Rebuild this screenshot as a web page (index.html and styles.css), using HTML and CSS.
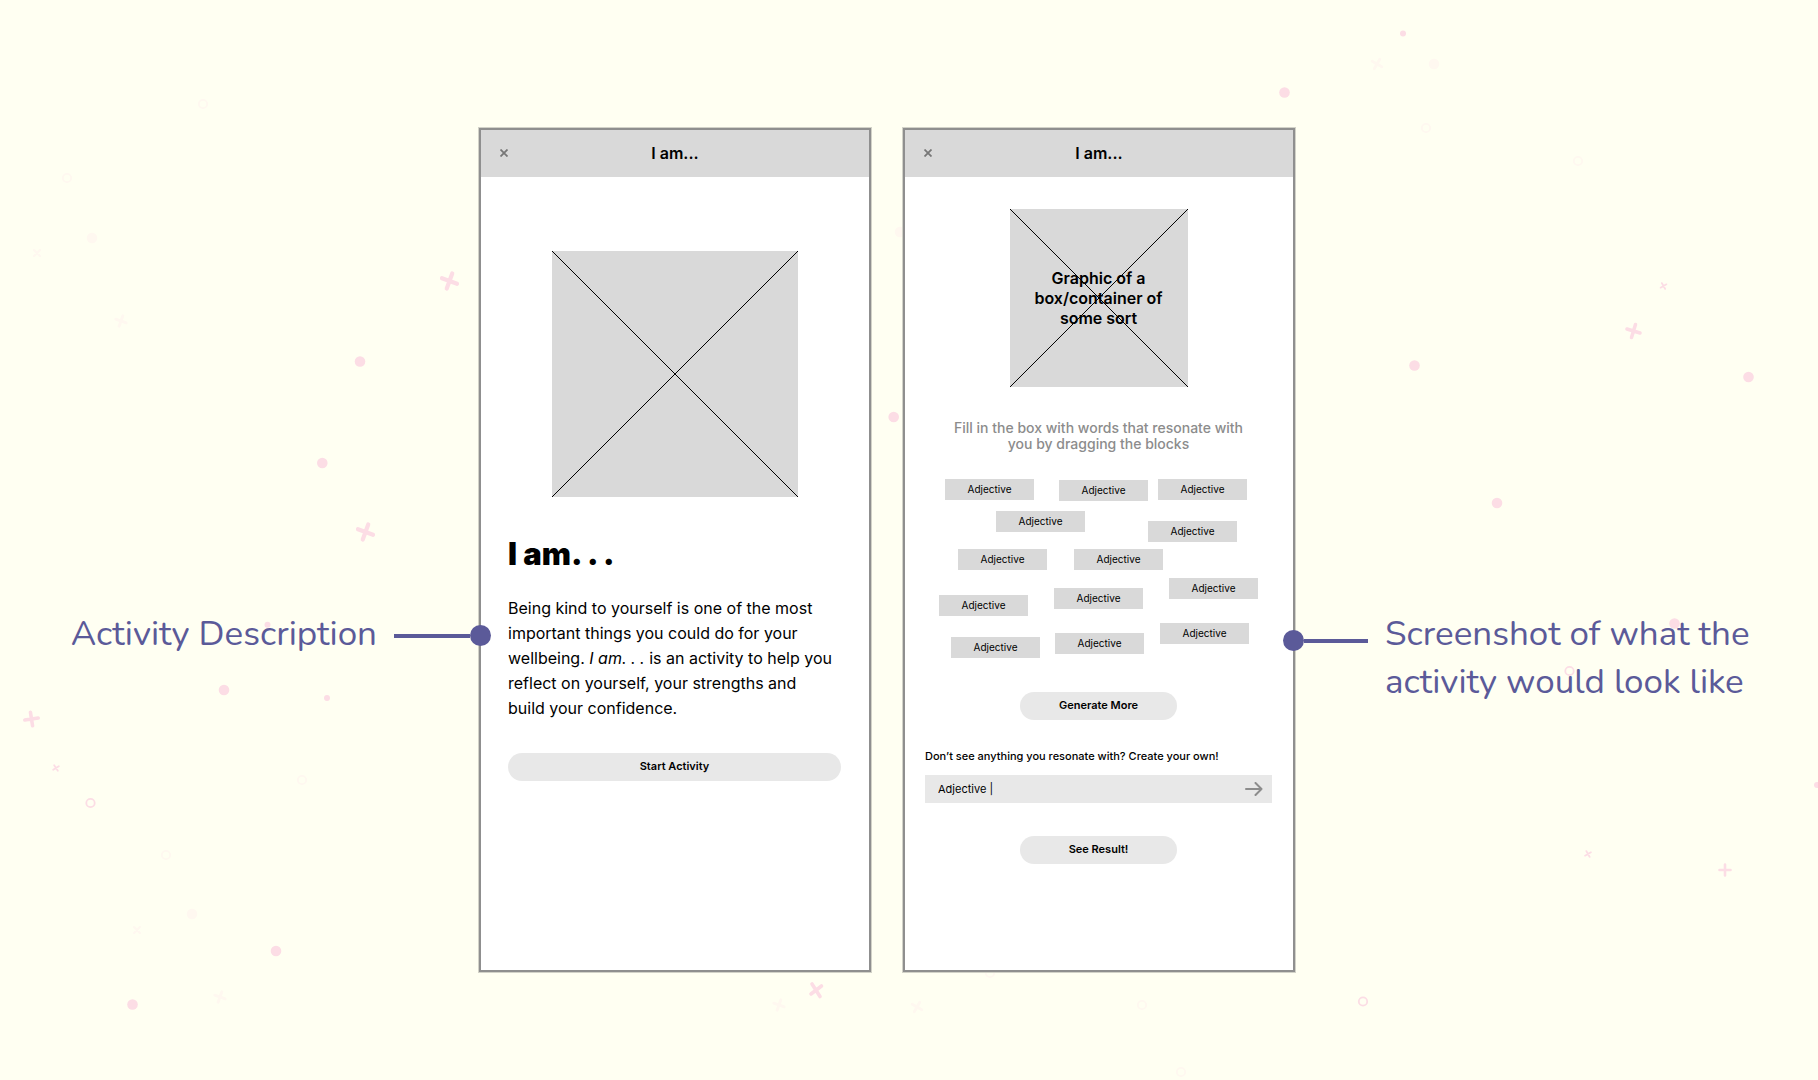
FILE: index.html
```html
<!DOCTYPE html>
<html lang="en">
<head>
<meta charset="utf-8">
<meta name="viewport" content="width=device-width, initial-scale=1">
<title>I am... activity wireframes</title>
<link rel="stylesheet" href="styles.css">
</head>
<body>
<svg class="confetti" viewBox="0 0 1818 1080" preserveAspectRatio="xMidYMid slice" aria-hidden="true">
  <defs>
    <circle id="dot" r="5.3"/>
    <circle id="dot-small" r="3"/>
    <circle id="ring" r="4.2" fill="none" stroke-width="1.8"/>
    <path id="plus" d="M-8 0H8M0-8V8" stroke-width="4.2" stroke-linecap="round"/>
    <path id="cross" d="M-3-3L3 3M3-3L-3 3" stroke-width="2.2" stroke-linecap="round"/>
  </defs>
  <g class="confetti-faint">
    <use href="#ring" x="203" y="104"/>
    <use href="#ring" x="67" y="178"/>
    <use href="#dot" x="92" y="238"/>
    <use href="#cross" x="37" y="253"/>
    <use href="#cross" transform="translate(121 321) rotate(-25) scale(1.3)"/>
    <use href="#ring" x="302" y="780"/>
    <use href="#ring" x="166" y="855"/>
    <use href="#dot" x="192" y="914"/>
    <use href="#cross" x="137" y="930"/>
    <use href="#cross" transform="translate(220 997) rotate(-25) scale(1.3)"/>
    <use href="#cross" transform="translate(1377 64) rotate(-15) scale(1.3)"/>
    <use href="#dot" x="1434" y="64"/>
    <use href="#ring" x="1426" y="128"/>
    <use href="#ring" x="1578" y="161"/>
    <use href="#dot" x="900" y="232"/>
    <use href="#cross" transform="translate(779 1005) rotate(-25) scale(1.3)"/>
    <use href="#cross" transform="translate(917 1007) rotate(-15) scale(1.3)"/>
    <use href="#ring" x="990" y="973"/>
    <use href="#ring" x="1142" y="1005"/>
    <use href="#ring" x="1181" y="1072"/>
  </g>
  <g class="confetti-pink">
    <use href="#plus" transform="translate(449.5 281) rotate(20)"/>
    <use href="#plus" transform="translate(365.5 532) rotate(20)"/>
    <use href="#plus" transform="translate(31.5 719) rotate(-9) scale(.85)"/>
    <use href="#plus" transform="translate(1633.5 331) rotate(17) scale(.85)"/>
    <path d="M812 984l8 12.500M811 994l10.500-8" stroke-width="3.6" stroke-linecap="round"/>
    <path d="M1719.500 870h11M1725 864.500v11" stroke-width="2.6" stroke-linecap="round"/>
    <use href="#cross" transform="translate(56 768) rotate(12) scale(.8)"/>
    <use href="#cross" transform="translate(1663.5 286) rotate(15) scale(.8)"/>
    <use href="#cross" transform="translate(1588 854) rotate(15) scale(.8)"/>
    <use href="#dot" x="360" y="361.5"/>
    <use href="#dot" x="322.3" y="463"/>
    <use href="#dot" x="224" y="690"/>
    <use href="#dot" x="276" y="951"/>
    <use href="#dot" x="132.500" y="1004.5"/>
    <use href="#dot" x="1284.500" y="92.5"/>
    <use href="#dot" x="1414.500" y="365.5"/>
    <use href="#dot" x="1748.500" y="377"/>
    <use href="#dot" x="1497" y="503"/>
    <use href="#dot" x="1674.500" y="623.500"/>
    <use href="#dot" x="893.700" y="417"/>
    <use href="#dot-small" x="267.500" y="624.700"/>
    <use href="#dot-small" x="327" y="698"/>
    <use href="#dot-small" x="1403" y="33.500"/>
    <use href="#dot-small" x="1817" y="785"/>
    <use href="#dot-small" x="869" y="606"/>
    <use href="#dot-small" x="905" y="733"/>
    <use href="#ring" x="90.500" y="803"/>
    <use href="#ring" x="1569.500" y="671"/>
    <use href="#ring" x="1363" y="1001.500"/>
  </g>
</svg>

<main class="board">
  <aside class="note note-left">
    <p class="note-text">Activity Description</p>
    <span class="connector"></span>
  </aside>

  <section class="phone">
    <header class="phone-header">
      <button class="close" type="button" aria-label="Close"><svg class="close-icon" viewBox="0 0 8 8"><path d="M.5.5l7 7M7.500.5l-7 7"/></svg></button>
      <h2 class="phone-title">I am...</h2>
    </header>
    <div class="phone-body intro">
      <div class="picture picture-large">
        <svg class="picture-cross" viewBox="0 0 100 100" preserveAspectRatio="none"><path d="M0 0L100 100M100 0L0 100"/></svg>
      </div>
      <h1 class="intro-title">I am. . .</h1>
      <p class="intro-text">Being kind to yourself is one of the most important things you could do for your wellbeing. <em>I am. . .</em> is an activity to help you reflect on yourself, your strengths and build your confidence.</p>
      <button class="pill pill-wide" type="button">Start Activity</button>
    </div>
  </section>

  <section class="phone phone-second">
    <header class="phone-header">
      <button class="close" type="button" aria-label="Close"><svg class="close-icon" viewBox="0 0 8 8"><path d="M.5.5l7 7M7.500.5l-7 7"/></svg></button>
      <h2 class="phone-title">I am...</h2>
    </header>
    <div class="phone-body activity">
      <div class="picture picture-small">
        <p class="picture-label">Graphic of a box/container of some sort</p>
        <svg class="picture-cross" viewBox="0 0 100 100" preserveAspectRatio="none"><path d="M0 0L100 100M100 0L0 100"/></svg>
      </div>
      <p class="hint">Fill in the box with words that resonate with you by dragging the blocks</p>
      <ul class="words">
        <li class="word w1">Adjective</li>
        <li class="word w2">Adjective</li>
        <li class="word w3">Adjective</li>
        <li class="word w4">Adjective</li>
        <li class="word w5">Adjective</li>
        <li class="word w6">Adjective</li>
        <li class="word w7">Adjective</li>
        <li class="word w8">Adjective</li>
        <li class="word w9">Adjective</li>
        <li class="word w10">Adjective</li>
        <li class="word w11">Adjective</li>
        <li class="word w12">Adjective</li>
        <li class="word w13">Adjective</li>
      </ul>
      <button class="pill" type="button">Generate More</button>
      <form class="own">
        <label class="own-label" for="own-word">Don’t see anything you resonate with? Create your own!</label>
        <div class="own-field">
          <input class="own-input" id="own-word" type="text" value="Adjective |">
          <button class="send" type="button" aria-label="Add word"><svg class="send-icon" viewBox="0 0 18 14"><path d="M1 7h15.500M10.500 1l6 6-6 6"/></svg></button>
        </div>
      </form>
      <button class="pill" type="button">See Result!</button>
    </div>
  </section>

  <aside class="note note-right">
    <span class="connector connector-right"></span>
    <p class="note-text">Screenshot of what the activity would look like</p>
  </aside>
</main>
</body>
</html>
```
FILE: styles.css
```css
* {
  box-sizing: border-box;
}

body {
  margin: 0;
  position: relative;
  min-height: 100vh;
  background: #fffff2;
  color: #000;
  font-family: Inter, "Liberation Sans", sans-serif;
}

h1, h2, p, ul {
  margin: 0;
  padding: 0;
}

button, input {
  border: 0;
  padding: 0;
  font: inherit;
  color: inherit;
  background: none;
}

/* Scattered background shapes */
.confetti {
  position: absolute;
  inset: 0;
  width: 100%;
  height: 100%;
}

.confetti-faint {
  fill: #fff8f0;
  stroke: #fff8f0;
  stroke-width: 0;
}

.confetti-pink {
  fill: #fcdde5;
  stroke: #fcdde5;
  stroke-width: 0;
}

.board {
  position: relative;
  display: grid;
  grid-template-columns: minmax(0, 479fr) 392px 424px minmax(0, 523fr);
  align-items: start;
  padding: 128px 0 108px;
}

/* Side notes with their connector lines */
.note {
  position: relative;
  z-index: 1;
  display: flex;
  align-items: flex-start;
  gap: 17px;
  padding-top: 482px;
  color: #5b5a99;
}

.note-left {
  justify-content: flex-end;
  margin-right: -12px;
}

.note-right {
  margin-left: -12px;
  padding-right: 48px;
}

.note-text {
  font-family: Nunito, Lato, sans-serif;
  font-size: 35px;
  line-height: 48px;
}

.connector {
  flex: none;
  display: flex;
  align-items: center;
  width: 97px;
  height: 21px;
  margin-top: 15px;
}

.connector::before {
  content: "";
  flex: 1;
  height: 4px;
  background: currentColor;
}

.connector::after {
  content: "";
  width: 21px;
  height: 21px;
  border-radius: 50%;
  background: currentColor;
}

.connector-right {
  flex-direction: row-reverse;
  width: 85px;
  margin-top: 20px;
}

/* Phone frames */
.phone {
  width: 392px;
  min-height: 844px;
  border: 2px solid #8f8f8f;
  box-shadow: 0 0 0 1px #d2d2c8;
  background: #fff;
}

.phone-second {
  margin-left: 32px;
}

.phone-header {
  display: grid;
  grid-template-columns: 46px 1fr 46px;
  align-items: center;
  height: 47px;
  padding-bottom: 1px;
  background: #d9d9d9;
}

.close {
  display: flex;
  justify-content: center;
}

.close-icon {
  width: 8px;
  height: 8px;
  fill: none;
  stroke: #777;
  stroke-width: 1.8;
}

.phone-title {
  font-size: 16px;
  font-weight: 600;
  line-height: 20px;
  text-align: center;
}

.phone-body {
  display: flex;
  flex-direction: column;
}

.picture {
  position: relative;
  display: flex;
  align-items: center;
  justify-content: center;
  align-self: center;
  background: #d9d9d9;
}

.picture-large {
  width: 246px;
  height: 246px;
}

.picture-small {
  width: 178px;
  height: 178px;
  padding: 0 20px;
}

.picture-cross {
  position: absolute;
  inset: 0;
  width: 100%;
  height: 100%;
  fill: none;
  stroke: #000;
}

.picture-cross path {
  vector-effect: non-scaling-stroke;
}

.picture-label {
  font-size: 16px;
  font-weight: 600;
  line-height: 20px;
  text-align: center;
}

.pill {
  align-self: center;
  width: 157px;
  height: 28px;
  padding-bottom: 2px;
  border-radius: 14px;
  background: #e8e8e8;
  font-size: 11px;
  font-weight: 600;
}

.pill-wide {
  width: 100%;
}

/* Introduction screen */
.intro {
  padding: 74px 28px 0 27px;
}

.intro-title {
  margin-top: 37px;
  font-size: 31px;
  font-weight: 900;
  line-height: 40px;
}

.intro-text {
  max-width: 328px;
  margin: 22px 0 32px;
  font-size: 16px;
  line-height: 25px;
}

/* Activity screen */
.activity {
  padding: 32px 21px 0 20px;
}

.hint {
  align-self: center;
  width: 300px;
  margin-top: 33px;
  color: #8c8c8c;
  font-size: 14px;
  font-weight: 500;
  line-height: 16px;
  text-align: center;
}

.words {
  position: relative;
  height: 179px;
  margin: 27px 14px 34px;
  list-style: none;
}

.word {
  position: absolute;
  width: 89px;
  height: 21px;
  background: #d9d9d9;
  font-size: 10px;
  line-height: 21px;
  text-align: center;
}

.w1 { left: 6px; top: 0; }
.w2 { left: 120px; top: 1px; }
.w3 { left: 219px; top: 0; }
.w4 { left: 57px; top: 32px; }
.w5 { left: 209px; top: 42px; }
.w6 { left: 19px; top: 70px; }
.w7 { left: 135px; top: 70px; }
.w8 { left: 230px; top: 99px; }
.w9 { left: 0; top: 116px; }
.w10 { left: 115px; top: 109px; }
.w11 { left: 221px; top: 144px; }
.w12 { left: 12px; top: 158px; }
.w13 { left: 116px; top: 154px; }

.own {
  display: flex;
  flex-direction: column;
  gap: 11px;
  margin: 29px 0 33px;
}

.own-label {
  font-size: 11px;
  font-weight: 500;
  line-height: 15px;
}

.own-field {
  display: flex;
  align-items: center;
  height: 28px;
  padding: 0 9px 0 13px;
  background: #e8e8e8;
}

.own-input {
  flex: 1;
  min-width: 0;
  height: 26px;
  outline: none;
  font-size: 11px;
}

.send {
  display: flex;
}

.send-icon {
  width: 18px;
  height: 14px;
  fill: none;
  stroke: #8c8c8c;
  stroke-width: 2;
  stroke-linecap: round;
  stroke-linejoin: round;
}
```
